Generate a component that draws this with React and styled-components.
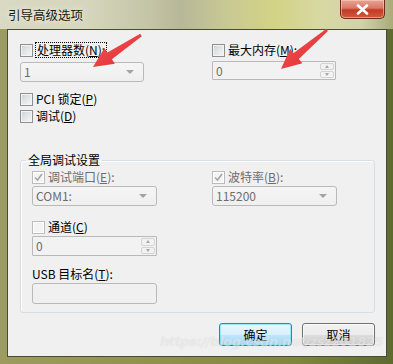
import React from "react";
import styled, { createGlobalStyle } from "styled-components";

const GlobalStyle = createGlobalStyle`
  html, body {
    margin: 0;
    padding: 0;
    background: #ffffff;
  }
  body {
    font-family: "Noto Sans CJK SC", "DejaVu Sans", sans-serif;
    font-size: 12px;
  }
`;

const Window = styled.div`
  position: relative;
  width: 393px;
  height: 364px;
  box-sizing: border-box;
  display: flex;
  flex-direction: column;
  background: linear-gradient(90deg, #9c9c62 0%, #8f914e 40%, #7f8640 75%, #5d6a32 100%);
  overflow: hidden;
`;

const TitleBar = styled.div`
  height: 29px;
  display: flex;
  justify-content: space-between;
  align-items: flex-start;
  padding-left: 8px;
  background: linear-gradient(
    90deg,
    #d9d9c4 0%,
    #d6d6bd 22%,
    #c4c4a6 38%,
    #b7b898 46%,
    #c9c994 58%,
    #d3d386 70%,
    #d8d8a4 82%,
    #d2d2aa 92%,
    #a9ab78 100%
  );
`;

const Title = styled.div`
  margin-top: 6px;
  font-size: 12.5px;
  line-height: 18px;
  color: #1a1a10;
  text-shadow: 0 0 6px rgba(255, 255, 240, 0.9);
`;

const CloseButton = styled.div`
  width: 45px;
  height: 19px;
  margin-right: 8px;
  box-sizing: border-box;
  border: 1px solid #6d2a1e;
  border-top: none;
  border-radius: 0 0 5px 5px;
  background: linear-gradient(180deg, #e7a594 0%, #d97868 45%, #c23a24 55%, #d25a3c 100%);
  box-shadow: inset 0 0 0 1px rgba(255, 220, 200, 0.5);
  display: flex;
  align-items: center;
  justify-content: center;
`;

const Client = styled.div`
  flex: 1;
  margin: 0 6px 7px 7px;
  border: 1px solid #4b4b32;
  background: #f0f0f0;
  padding: 13px 11px 0 12px;
  display: flex;
  flex-direction: column;
`;

const TwoColumns = styled.div`
  display: grid;
  grid-template-columns: ${(p) => p.$first}px 1fr;
`;

const Field = styled.div`
  display: flex;
  flex-direction: column;
  gap: ${(p) => p.$gap ?? 4}px;
  margin-top: ${(p) => p.$top ?? 0}px;
`;

const CheckRow = styled.label`
  display: flex;
  align-items: center;
  gap: 3px;
  height: 14px;
  margin-top: ${(p) => p.$top ?? 0}px;
  color: ${(p) => (p.$dim ? "#6d6d6d" : "#000")};
  line-height: 14px;
  white-space: nowrap;
`;

const Box = styled.span`
  width: 13px;
  height: 13px;
  box-sizing: border-box;
  flex: none;
  border: 1px solid ${(p) => (p.$disabled ? "#bcbcbc" : "#8e8f8f")};
  background: ${(p) =>
    p.$disabled
      ? "#f4f4f4"
      : "linear-gradient(135deg, #d0d2d6 0%, #e8e9eb 60%, #f8f8f8 100%)"};
  box-shadow: inset 0 0 0 1px ${(p) => (p.$disabled ? "#ffffff" : "#f4f4f4")};
  display: flex;
  align-items: center;
  justify-content: center;
`;

const Focus = styled.span`
  outline: 1px dotted #000;
  outline-offset: 0;
  padding: 0 1px;
`;

const Control = styled.div`
  width: ${(p) => p.$w}px;
  height: ${(p) => p.$h ?? 20}px;
  box-sizing: border-box;
  border: 1px solid #b9b9b9;
  border-radius: ${(p) => p.$r ?? 3}px;
  background: ${(p) => p.$bg ?? "linear-gradient(180deg, #f5f5f5 0%, #efefef 100%)"};
  color: #6d6d6d;
  display: flex;
  align-items: center;
  padding-left: 3px;
  line-height: 16px;
  margin-top: ${(p) => p.$top ?? 0}px;
`;

const ControlText = styled.span`
  flex: 1;
`;

const DropArrow = styled.span`
  width: 0;
  height: 0;
  margin-right: 9px;
  border-left: 4px solid transparent;
  border-right: 4px solid transparent;
  border-top: 4px solid #a3a3a3;
`;

const SpinButtons = styled.div`
  align-self: stretch;
  width: 14px;
  margin: 1px;
  display: flex;
  flex-direction: column;
  gap: 1px;
`;

const SpinPart = styled.div`
  flex: 1;
  border: 1px solid #d3d3d3;
  border-radius: 2px;
  background: #f2f2f2;
  display: flex;
  align-items: center;
  justify-content: center;
`;

const TinyArrow = styled.span`
  width: 0;
  height: 0;
  border-left: 2.5px solid transparent;
  border-right: 2.5px solid transparent;
  ${(p) => (p.$up ? "border-bottom" : "border-top")}: 3px solid #a8a8a8;
`;

const Group = styled.fieldset`
  margin: 29px 0 0 0;
  padding: 2px 0 8px 11px;
  border: 1px solid #d5dfe5;
  border-radius: 3px;
  box-shadow: inset 1px 1px 0 #ffffff;
  min-width: 0;
`;

const Legend = styled.legend`
  margin-left: -6px;
  padding: 0 2px;
  line-height: 16px;
  color: #000;
`;

const GroupLabel = styled.div`
  margin-top: ${(p) => p.$top ?? 0}px;
  line-height: 15px;
  color: #000;
  white-space: nowrap;
`;

const ButtonRow = styled.div`
  display: flex;
  justify-content: flex-end;
  gap: 10px;
  margin-top: 10px;
`;

const Button = styled.div`
  width: 73px;
  height: 23px;
  box-sizing: border-box;
  border: 1px solid ${(p) => (p.$primary ? "#3c7fb1" : "#707070")};
  border-radius: 3px;
  background: ${(p) =>
    p.$primary
      ? "linear-gradient(180deg, #eaf6fd 0%, #d9f0fc 50%, #bee6fd 51%, #a7d9f5 100%)"
      : "linear-gradient(180deg, #f2f2f2 0%, #ebebeb 50%, #dddddd 51%, #cfcfcf 100%)"};
  box-shadow: inset 0 0 0 1px ${(p) => (p.$primary ? "#48e7fb88" : "#ffffffaa")};
  color: #000;
  display: flex;
  align-items: center;
  justify-content: center;
  line-height: 16px;
`;

const Overlay = styled.svg`
  position: absolute;
  left: 0;
  top: 0;
  pointer-events: none;
`;

const Watermark = styled.div`
  position: absolute;
  left: 160px;
  top: 334px;
  font-family: "DejaVu Sans", sans-serif;
  font-size: 13px;
  font-style: italic;
  font-weight: bold;
  letter-spacing: -0.4px;
  color: rgba(255, 255, 255, 0.45);
  text-shadow: 0 0 1px rgba(150, 150, 150, 0.3);
  pointer-events: none;
  white-space: nowrap;
`;

const Check = ({ disabled, checked }) => (
  <Box $disabled={disabled}>
    {checked && (
      <svg width="9" height="9" viewBox="0 0 9 9">
        <path d="M1 4.5 L3.5 7 L8 1" fill="none" stroke="#a6a6a6" strokeWidth="1.6" />
      </svg>
    )}
  </Box>
);

const Combo = ({ value, w }) => (
  <Control $w={w}>
    <ControlText>{value}</ControlText>
    <DropArrow />
  </Control>
);

const Spin = ({ value, w, h }) => (
  <Control $w={w} $h={h} $r={1} $bg="#f2f2f2">
    <ControlText>{value}</ControlText>
    <SpinButtons>
      <SpinPart>
        <TinyArrow $up />
      </SpinPart>
      <SpinPart>
        <TinyArrow />
      </SpinPart>
    </SpinButtons>
  </Control>
);

function arrowPoints([x1, y1], [x2, y2], w0, w1, hl, hw) {
  const len = Math.hypot(x2 - x1, y2 - y1);
  const dx = (x2 - x1) / len;
  const dy = (y2 - y1) / len;
  const nx = -dy;
  const ny = dx;
  const bx = x2 - dx * hl;
  const by = y2 - dy * hl;
  const pts = [
    [x1 + (nx * w0) / 2, y1 + (ny * w0) / 2],
    [bx + (nx * w1) / 2, by + (ny * w1) / 2],
    [bx + (nx * hw) / 2, by + (ny * hw) / 2],
    [x2, y2],
    [bx - (nx * hw) / 2, by - (ny * hw) / 2],
    [bx - (nx * w1) / 2, by - (ny * w1) / 2],
    [x1 - (nx * w0) / 2, y1 - (ny * w0) / 2],
  ];
  return pts.map((p) => p.map((v) => v.toFixed(1)).join(",")).join(" ");
}

const arrows = [
  { from: [141, 35], to: [93, 67] },
  { from: [327, 30], to: [281, 69] },
];

export default function App() {
  return (
    <>
      <GlobalStyle />
      <Window>
        <TitleBar>
          <Title>引导高级选项</Title>
          <CloseButton>
            <svg width="13" height="11" viewBox="0 0 13 11">
              <path
                d="M2 1.5 L11 9.5 M11 1.5 L2 9.5"
                stroke="#ffffff"
                strokeWidth="2.6"
                strokeLinecap="round"
              />
            </svg>
          </CloseButton>
        </TitleBar>

        <Client>
          <TwoColumns $first={192}>
            <Field $gap={5}>
              <CheckRow>
                <Check />
                <Focus>
                  处理器数(<u>N</u>):
                </Focus>
              </CheckRow>
              <Combo value="1" w={124} />
            </Field>
            <Field>
              <CheckRow>
                <Check />
                <span>
                  最大内存(<u>M</u>):
                </span>
              </CheckRow>
              <Spin value="0" w={124} h={19} />
            </Field>
          </TwoColumns>

          <CheckRow $top={10}>
            <Check />
            <span>
              PCI 锁定(<u>P</u>)
            </span>
          </CheckRow>
          <CheckRow $top={3}>
            <Check />
            <span>
              调试(<u>D</u>)
            </span>
          </CheckRow>

          <Group>
            <Legend>全局调试设置</Legend>
            <TwoColumns $first={180}>
              <Field $gap={2}>
                <CheckRow $dim>
                  <Check disabled checked />
                  <span>
                    调试端口(<u>E</u>):
                  </span>
                </CheckRow>
                <Combo value="COM1:" w={125} />
              </Field>
              <Field $gap={2}>
                <CheckRow $dim>
                  <Check disabled checked />
                  <span>
                    波特率(<u>B</u>):
                  </span>
                </CheckRow>
                <Combo value="115200" w={125} />
              </Field>
            </TwoColumns>

            <Field $gap={2} $top={14}>
              <CheckRow>
                <Check disabled />
                <span>
                  通道(<u>C</u>)
                </span>
              </CheckRow>
              <Spin value="0" w={125} h={20} />
            </Field>

            <GroupLabel $top={10}>
              USB 目标名(<u>T</u>):
            </GroupLabel>
            <Control $w={125} $h={21} $bg="#f0f0f0" $top={2} />
          </Group>

          <ButtonRow>
            <Button $primary>确定</Button>
            <Button>取消</Button>
          </ButtonRow>
        </Client>

        <Overlay width="393" height="364">
          <defs>
            <linearGradient id="redArrow" x1="0" y1="0" x2="1" y2="1">
              <stop offset="0" stopColor="#f25a5a" />
              <stop offset="1" stopColor="#e0262c" />
            </linearGradient>
          </defs>
          {arrows.map((a, i) => (
            <polygon
              key={i}
              points={arrowPoints(a.from, a.to, 3, 8, 20, 19)}
              fill="url(#redArrow)"
            />
          ))}
        </Overlay>
        <Watermark>https://blog.csdn.net/zsz201825</Watermark>
      </Window>
    </>
  );
}
